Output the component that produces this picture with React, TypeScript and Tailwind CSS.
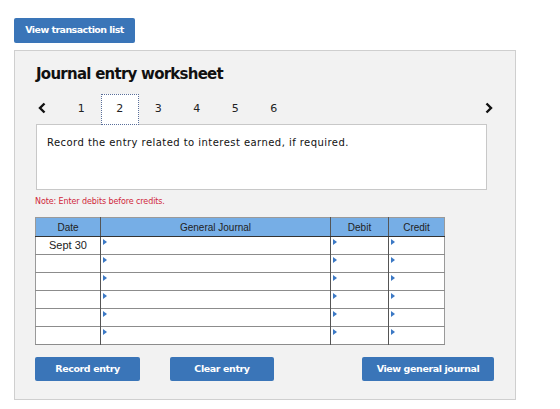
import React from "react";

const verdana = { fontFamily: '"DejaVu Sans", Verdana, sans-serif' };
const arial = { fontFamily: '"Liberation Sans", Arial, sans-serif' };

function Tri() {
  return (
    <span className="absolute left-[2px] top-[2px] block w-0 h-0 border-y-[3px] border-y-transparent border-l-[4px] border-l-[#3b78c4]" />
  );
}

function Btn({ label, w }: { label: string; w: string }) {
  return (
    <button
      className={`shrink-0 h-[24px] ${w} rounded-[2px] bg-[#3a75b8] text-white text-[9.5px] font-bold tracking-[-0.4px]`}
      style={verdana}
    >
      {label}
    </button>
  );
}

export default function App() {
  const rows = [0, 1, 2, 3, 4, 5];
  return (
    <div className="w-[560px] h-[409px] bg-white overflow-hidden flex flex-col items-start pl-[14px] pt-[18px]">
      <button
        className="h-[25px] w-[121px] rounded-[2px] bg-[#3a75b8] text-white text-[9.5px] font-bold tracking-[-0.55px]"
        style={verdana}
      >
        View transaction list
      </button>
      <div className="mt-[7px] w-[502px] h-[350px] border border-[#cfcfcf] bg-[#f2f2f2] pl-[21px] pr-[28px] flex flex-col">
        <div
          className="mt-[14px] text-[15px] leading-[18px] font-bold text-[#111] tracking-[-0.75px]"
          style={verdana}
        >
          Journal entry worksheet
        </div>
        <div className="mt-[11px] flex items-center relative z-10 -mb-[1px] mr-[-5px] h-[31px]">
          <div className="w-[26px] flex items-center pl-[2px] -mt-[3px]">
            <svg className="block" width="8" height="12" viewBox="0 0 8 12">
              <path d="M6.5 1.5 L2 6 L6.5 10.5" fill="none" stroke="#111" strokeWidth="2.4" />
            </svg>
          </div>
          {[1, 2, 3, 4, 5, 6].map((n) => (
            <div
              key={n}
              className={`w-[38.5px] h-[31px] flex items-center justify-center text-[11px] text-[#222] pb-[1px] ${
                n === 2 ? "bg-white border border-dotted border-[#5a6f9a]" : ""
              }`}
              style={verdana}
            >
              {n}
            </div>
          ))}
          <div className="flex-1" />
          <svg className="block -mt-[3px] -mr-[1px]" width="8" height="12" viewBox="0 0 8 12">
            <path d="M1.5 1.5 L6 6 L1.5 10.5" fill="none" stroke="#111" strokeWidth="2.4" />
          </svg>
        </div>
        <div className="shrink-0 w-[451px] h-[66px] bg-white border border-[#c8c8c8] pl-[10px] pt-[10px]">
          <p className="text-[10px] text-[#111] tracking-[0.45px]" style={verdana}>
            Record the entry related to interest earned, if required.
          </p>
        </div>
        <div className="mt-[6px] -ml-[1px] text-[8px] leading-[12px] text-[#d0273b] tracking-[-0.1px]" style={verdana}>
          Note: Enter debits before credits.
        </div>
        <table
          className="mt-[9px] -ml-[1px] border-collapse table-fixed w-[409px] border border-[#9a9a9a]"
          style={arial}
        >
          <colgroup>
            <col className="w-[65px]" />
            <col className="w-[230px]" />
            <col className="w-[58px]" />
            <col className="w-[56px]" />
          </colgroup>
          <thead>
            <tr className="h-[19px] bg-[#76aee6] text-[10px] text-[#222]">
              <th className="font-normal border-b border-b-[#333] border-r border-r-[#555]">Date</th>
              <th className="font-normal border-b border-b-[#333] border-r border-r-[#555]">General Journal</th>
              <th className="font-normal border-b border-b-[#333] border-r border-r-[#555]">Debit</th>
              <th className="font-normal border-b border-b-[#333]">Credit</th>
            </tr>
          </thead>
          <tbody>
            {rows.map((r) => (
              <tr key={r} className="h-[18px] bg-white border-b border-b-[#8c8c8c]">
                <td className="border-r border-r-[#555] text-center text-[11px] text-[#222] align-middle p-0">
                  {r === 0 ? "Sept 30" : ""}
                </td>
                <td className="relative border-r border-r-[#555] p-0">
                  <Tri />
                </td>
                <td className="relative border-r border-r-[#555] p-0">
                  <Tri />
                </td>
                <td className="relative p-0">
                  <Tri />
                </td>
              </tr>
            ))}
          </tbody>
        </table>
        <div className="mt-[12px] -ml-[1px] flex items-center">
          <Btn label="Record entry" w="w-[105px]" />
          <div className="w-[30px] shrink-0" />
          <Btn label="Clear entry" w="w-[104px]" />
          <div className="w-[88px] shrink-0" />
          <Btn label="View general journal" w="w-[132px]" />
        </div>
      </div>
    </div>
  );
}
